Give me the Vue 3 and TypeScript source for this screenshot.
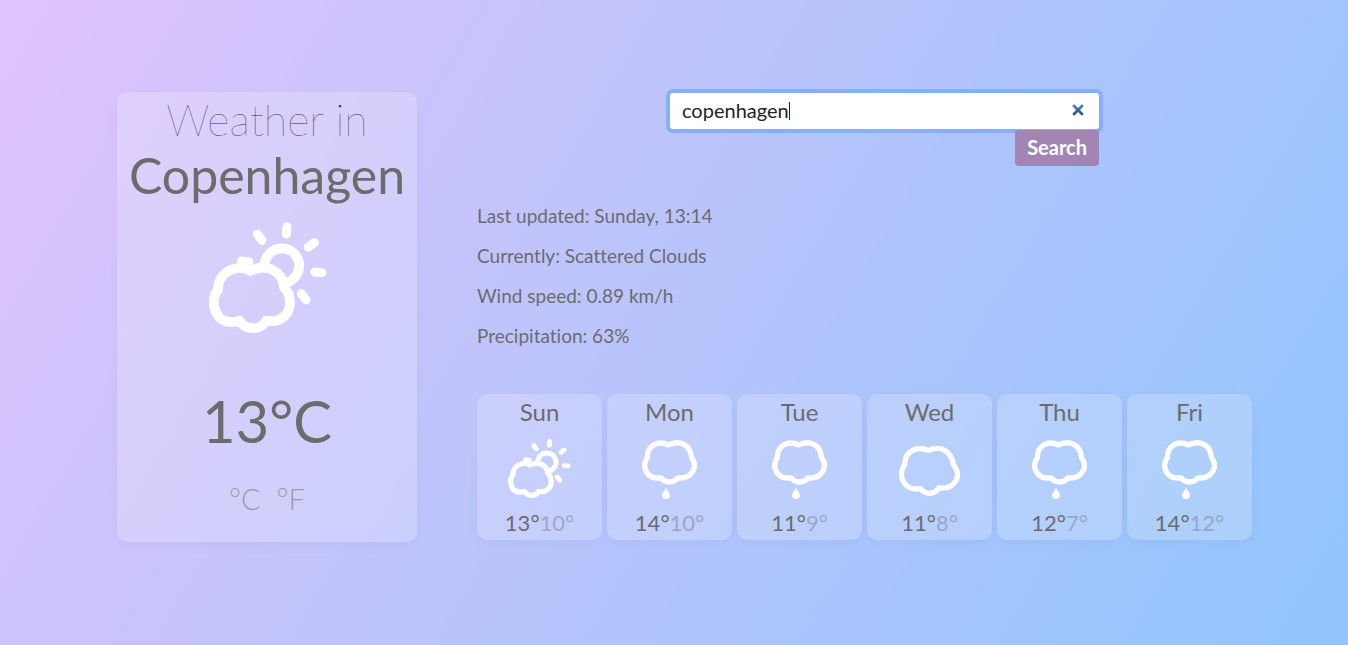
<script setup lang="ts">
import { onMounted, ref } from 'vue'

type IconName = 'partly' | 'rain' | 'cloud'

interface Day {
  name: string
  icon: IconName
  max: number
  min: number
}

const query = ref('copenhagen')
const searchBox = ref<HTMLInputElement | null>(null)

const details: string[] = [
  'Last updated: Sunday, 13:14',
  'Currently: Scattered Clouds',
  'Wind speed: 0.89 km/h',
  'Precipitation: 63%',
]

const days: Day[] = [
  { name: 'Sun', icon: 'partly', max: 13, min: 10 },
  { name: 'Mon', icon: 'rain', max: 14, min: 10 },
  { name: 'Tue', icon: 'rain', max: 11, min: 9 },
  { name: 'Wed', icon: 'cloud', max: 11, min: 8 },
  { name: 'Thu', icon: 'rain', max: 12, min: 7 },
  { name: 'Fri', icon: 'rain', max: 14, min: 12 },
]

onMounted(() => searchBox.value?.focus())
</script>

<template>
  <svg class="symbols" aria-hidden="true">
    <symbol id="icon-partly" viewBox="58 36 354 333">
      <g fill="none" stroke="#fff" stroke-width="29" stroke-linejoin="round">
        <path d="M182 183C145 160 84 184 85 239C62 262 68 335 124 336Q140 337 150 332C168 362 212 362 230 332C272 340 302 313 301 275Q300 248 283 232C279 185 233 158 182 183Z" />
        <path d="M225 162A52 52 0 1 1 291 217" />
        <g stroke-linecap="round" stroke-width="27">
          <path d="M292 50L290 72M203 73L217 91M356 111L374 98M375 186L397 188M335 251L349 269" />
          <path d="M156 153L178 155" />
        </g>
      </g>
    </symbol>
    <symbol id="icon-rain" viewBox="516 158 165 178">
      <path d="M595 173C563 157 530 176 532 211C514 236 526 278 573 272C587 289 610 289 624 272C662 277 688 241 665 211C662 171 628 157 595 173Z" fill="none" stroke="#fff" stroke-width="16" stroke-linejoin="round" />
      <path d="M588 302C583 312 576 318 576 325A12 11 0 0 0 600 325C600 318 593 312 588 302Z" fill="#fff" />
    </symbol>
    <symbol id="icon-cloud" viewBox="117 177 182 150">
      <path d="M205 191C173 174 133 193 134 231C112 263 128 313 181 305C196 324 222 324 236 303C285 308 308 264 280 233C272 188 238 175 205 191Z" fill="none" stroke="#fff" stroke-width="16" stroke-linejoin="round" />
    </symbol>
  </svg>

  <main class="page">
    <section class="current">
      <h1 class="title">Weather in</h1>
      <h2 class="city">Copenhagen</h2>
      <svg class="current-icon" role="img" aria-label="Scattered clouds"><use href="#icon-partly" /></svg>
      <p class="temperature">13°C</p>
      <div class="units">
        <a href="#celsius">°C</a>
        <a href="#fahrenheit">°F</a>
      </div>
    </section>

    <section class="content">
      <form class="search" @submit.prevent>
        <input ref="searchBox" v-model="query" class="search-input" type="search" aria-label="City" autocomplete="off" spellcheck="false" />
        <span v-if="query === 'copenhagen'" class="caret" aria-hidden="true"></span>
        <button class="search-button" type="submit">Search</button>
      </form>

      <ul class="details">
        <li v-for="line in details" :key="line">{{ line }}</li>
      </ul>

      <div class="forecast">
        <article v-for="day in days" :key="day.name" class="day">
          <h3 class="day-name">{{ day.name }}</h3>
          <div class="day-icon">
            <svg :class="day.icon" aria-hidden="true"><use :href="`#icon-${day.icon}`" /></svg>
          </div>
          <p class="day-temps">{{ day.max }}°<span class="min">{{ day.min }}°</span></p>
        </article>
      </div>
    </section>
  </main>
</template>

<style>
body {
  margin: 0;
}
</style>

<style scoped>
* {
  box-sizing: border-box;
}

.symbols {
  position: absolute;
  width: 0;
  height: 0;
}

.page {
  min-height: 100vh;
  padding: 92px 96px 92px 117px;
  display: grid;
  grid-template-columns: 300px minmax(0, 1fr);
  gap: 60px;
  align-items: start;
  background: linear-gradient(120deg, #e0c3fc 0%, #90c5fc 100%);
  color: #6c6c6c;
  font-family: Lato, "Open Sans", sans-serif;
  font-variant-ligatures: none;
}

h1, h2, h3, p, ul {
  margin: 0;
  padding: 0;
  font-weight: 400;
}

.current {
  min-height: 450px;
  display: flex;
  flex-direction: column;
  align-items: center;
  border-radius: 10px;
  background: rgba(255, 255, 255, 0.2);
  box-shadow: 0 4px 12px rgba(0, 0, 0, 0.03);
}

.title {
  color: #333;
  font-size: 43px;
  line-height: 56px;
  font-weight: 100;
}

.city {
  font-size: 50px;
  line-height: 54px;
}

.current-icon {
  width: 118px;
  height: 111px;
  margin: 20px 0 0 2px;
}

.temperature {
  margin-top: 48px;
  font-size: 58px;
  line-height: 80px;
}

.units {
  display: flex;
  gap: 16px;
  margin-top: 20px;
  font-size: 29px;
  line-height: 36px;
  font-weight: 300;
}

.units a {
  color: #9c9ca4;
  text-decoration: none;
}

.search {
  width: 429px;
  max-width: 100%;
  margin-left: 193px;
  padding-top: 1px;
  position: relative;
  display: flex;
  flex-direction: column;
  align-items: flex-end;
  gap: 1px;
}

.search-input {
  width: 100%;
  height: 36px;
  padding: 0 12px 2px;
  border: 0;
  border-radius: 3px;
  outline: 0;
  background: #fff;
  box-shadow: 0 0 0 4px #86aeff;
  color: #212529;
  caret-color: transparent;
  font: 400 20px Lato, sans-serif;
  appearance: none;
}

.search-input::-webkit-search-cancel-button {
  font-size: 17px;
}

.caret {
  position: absolute;
  top: 10px;
  left: 119px;
  width: 1px;
  height: 18px;
  background: #212529;
  pointer-events: none;
}

.search-button {
  height: 36px;
  padding: 0 12px 2px;
  border: 0;
  border-radius: 4px;
  position: relative;
  background: #a285b5;
  color: #fff;
  font: 700 20px Lato, sans-serif;
}

.details {
  margin-top: 30px;
  list-style: none;
  font-size: 19px;
  line-height: 40px;
}

.forecast {
  margin-top: 38px;
  display: grid;
  grid-template-columns: repeat(6, minmax(0, 1fr));
  gap: 5px;
}

.day {
  min-height: 146px;
  border-radius: 10px;
  background: rgba(255, 255, 255, 0.2);
  box-shadow: 0 4px 12px rgba(0, 0, 0, 0.03);
  text-align: center;
}

.day-name {
  font-size: 24px;
  line-height: 36px;
}

.day-icon {
  height: 76px;
  display: flex;
  align-items: center;
  justify-content: center;
}

.partly {
  width: 63px;
  height: 59px;
}

.rain {
  width: 55px;
  height: 59px;
  margin-top: 2px;
}

.cloud {
  width: 61px;
  height: 50px;
  margin-top: 6px;
}

.day-temps {
  font-size: 22px;
  line-height: 34px;
}

.min {
  opacity: 0.4;
}
</style>
